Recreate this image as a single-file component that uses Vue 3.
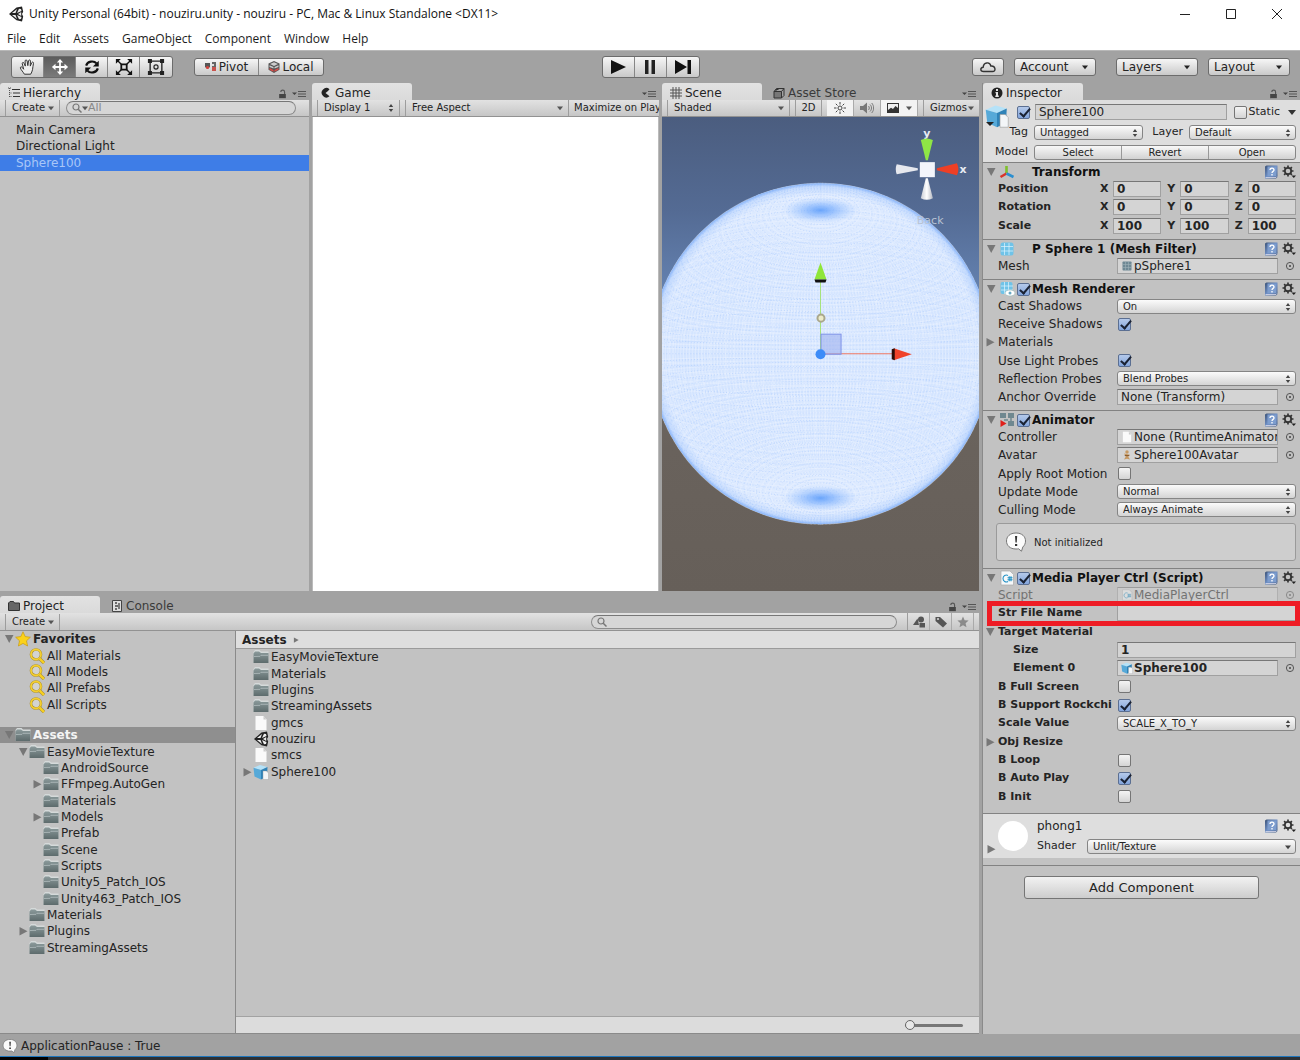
<script setup>
const menus = ['File', 'Edit', 'Assets', 'GameObject', 'Component', 'Window', 'Help']

const tools = [
  { id: 'hand', label: 'Hand' },
  { id: 'move', label: 'Move', active: true },
  { id: 'rotate', label: 'Rotate' },
  { id: 'scale', label: 'Scale' },
  { id: 'rect', label: 'Rect' },
]

const hierarchy = ['Main Camera', 'Directional Light', 'Sphere100']

const favorites = [
  { name: 'Favorites', icon: 'star', level: 0, fold: 'down', bold: true },
  { name: 'All Materials', icon: 'find', level: 1 },
  { name: 'All Models', icon: 'find', level: 1 },
  { name: 'All Prefabs', icon: 'find', level: 1 },
  { name: 'All Scripts', icon: 'find', level: 1 },
]

const folders = [
  { name: 'Assets', icon: 'folder', level: 0, fold: 'down', bold: true, selected: true },
  { name: 'EasyMovieTexture', icon: 'folder', level: 1, fold: 'down' },
  { name: 'AndroidSource', icon: 'folder', level: 2 },
  { name: 'FFmpeg.AutoGen', icon: 'folder', level: 2, fold: 'right' },
  { name: 'Materials', icon: 'folder', level: 2 },
  { name: 'Models', icon: 'folder', level: 2, fold: 'right' },
  { name: 'Prefab', icon: 'folder', level: 2 },
  { name: 'Scene', icon: 'folder', level: 2 },
  { name: 'Scripts', icon: 'folder', level: 2 },
  { name: 'Unity5_Patch_IOS', icon: 'folder', level: 2 },
  { name: 'Unity463_Patch_IOS', icon: 'folder', level: 2 },
  { name: 'Materials', icon: 'folder', level: 1 },
  { name: 'Plugins', icon: 'folder', level: 1, fold: 'right' },
  { name: 'StreamingAssets', icon: 'folder', level: 1 },
]

const files = [
  { name: 'EasyMovieTexture', icon: 'folder' },
  { name: 'Materials', icon: 'folder' },
  { name: 'Plugins', icon: 'folder' },
  { name: 'StreamingAssets', icon: 'folder' },
  { name: 'gmcs', icon: 'file' },
  { name: 'nouziru', icon: 'unity' },
  { name: 'smcs', icon: 'file' },
  { name: 'Sphere100', icon: 'cube', fold: 'right' },
]

const components = [
  {
    id: 'transform', title: 'Transform', icon: 'axes',
    rows: [
      { type: 'vector', label: 'Position', value: ['0', '0', '0'], bold: true },
      { type: 'vector', label: 'Rotation', value: ['0', '0', '0'], bold: true },
      { type: 'vector', label: 'Scale', value: ['100', '100', '100'], bold: true },
    ],
  },
  {
    id: 'filter', title: 'P Sphere 1 (Mesh Filter)', icon: 'mesh',
    rows: [{ type: 'object', label: 'Mesh', value: 'pSphere1', icon: 'meshsmall' }],
  },
  {
    id: 'renderer', title: 'Mesh Renderer', icon: 'renderer', toggle: true,
    rows: [
      { type: 'select', label: 'Cast Shadows', value: 'On' },
      { type: 'check', label: 'Receive Shadows', value: true },
      { type: 'fold', label: 'Materials', fold: 'right' },
      { type: 'check', label: 'Use Light Probes', value: true },
      { type: 'select', label: 'Reflection Probes', value: 'Blend Probes' },
      { type: 'object', label: 'Anchor Override', value: 'None (Transform)' },
    ],
  },
  {
    id: 'animator', title: 'Animator', icon: 'animator', toggle: true, help: 'Not initialized',
    rows: [
      { type: 'object', label: 'Controller', value: 'None (RuntimeAnimatorController)', icon: 'file' },
      { type: 'object', label: 'Avatar', value: 'Sphere100Avatar', icon: 'avatar' },
      { type: 'check', label: 'Apply Root Motion', value: false },
      { type: 'select', label: 'Update Mode', value: 'Normal' },
      { type: 'select', label: 'Culling Mode', value: 'Always Animate' },
    ],
  },
  {
    id: 'media', title: 'Media Player Ctrl (Script)', icon: 'script', toggle: true,
    rows: [
      { type: 'object', label: 'Script', value: 'MediaPlayerCtrl', icon: 'script', disabled: true },
      { type: 'text', label: 'Str File Name', value: '', bold: true, marked: true },
      { type: 'fold', label: 'Target Material', fold: 'down', bold: true },
      { type: 'text', label: 'Size', value: '1', bold: true, indent: true },
      { type: 'object', label: 'Element 0', value: 'Sphere100', icon: 'cube', bold: true, indent: true },
      { type: 'check', label: 'B Full Screen', value: false, bold: true },
      { type: 'check', label: 'B Support Rockchi', value: true, bold: true },
      { type: 'select', label: 'Scale Value', value: 'SCALE_X_TO_Y', bold: true },
      { type: 'fold', label: 'Obj Resize', fold: 'right', bold: true },
      { type: 'check', label: 'B Loop', value: false, bold: true },
      { type: 'check', label: 'B Auto Play', value: true, bold: true },
      { type: 'check', label: 'B Init', value: false, bold: true },
    ],
  },
]

// Unit sphere seen from a nearby camera, projected to scene coordinates.
const CX = 158
const CY = 236
const DISTANCE = 1.866
const FOCAL = 267.8

function project(lat, lon) {
  const x = Math.cos(lat) * Math.sin(lon)
  const y = Math.sin(lat)
  const z = Math.cos(lat) * Math.cos(lon)
  const k = FOCAL / (DISTANCE - z)
  return (CX + x * k).toFixed(1) + ' ' + (CY - y * k).toFixed(1)
}

function meridians(count) {
  let d = ''
  for (let i = 0; i < count; i++) {
    const lon = ((i + 0.5) / count) * Math.PI * 2
    for (let j = 0; j <= 40; j++) d += (j ? 'L' : 'M') + project(-Math.PI / 2 + (j / 40) * Math.PI, lon)
  }
  return d
}

function parallels(count) {
  let d = ''
  for (let i = 1; i < count; i++) {
    const lat = -Math.PI / 2 + (i / count) * Math.PI
    for (let j = 0; j <= 72; j++) d += (j ? 'L' : 'M') + project(lat, (j / 72) * Math.PI * 2)
  }
  return d
}

const meridianPath = meridians(180)
const parallelPath = parallels(90)
const dotPath = parallels(70)
</script>

<template>
  <div class="editor">
    <svg class="symbols" aria-hidden="true">
      <defs>
        <linearGradient id="gFolder" x1="0" y1="0" x2="0" y2="1"><stop offset="0" stop-color="#8b9a9b" /><stop offset="1" stop-color="#5d6b6c" /></linearGradient>
        <linearGradient id="gCone" x1="0" y1="0" x2="1" y2="0"><stop offset="0" stop-color="#c9ccd4" /><stop offset=".5" stop-color="#fff" /><stop offset="1" stop-color="#b4b8c2" /></linearGradient>
        <linearGradient id="gBook" x1="0" y1="0" x2="1" y2="1"><stop offset="0" stop-color="#3d5478" /><stop offset=".5" stop-color="#6f8fc4" /><stop offset="1" stop-color="#40577c" /></linearGradient>
      </defs>
      <symbol id="unity" viewBox="0 0 16 16">
        <path d="M8.5 1.5 14 .5l1.2 5.2L14 8l1.2 2.5L14 15.500l-5.500-1.200L1 8z" fill="#222" />
        <path d="M4 7l5-4-1.500 4zM4 9l5 4-1.500-4zM9 7l2-4.200 2 .2.500 2zM9 9l2 4.200 2-.2.500-2zM10 8l3.200-2v4z" fill="#eee" />
      </symbol>
      <symbol id="hand" viewBox="0 0 20 20">
        <path d="M6 18c-1-2-4-5-4.500-7 0-1.400 1.500-1.400 2.200-.4L5.200 12.500 3.600 6.200c-.2-1.500 1.600-1.700 2-.4L7 9 6.800 3.300c0-1.500 2-1.500 2.200 0L9.800 8.500l.8-5.400c.3-1.400 2.200-1.200 2.100.3L12.500 9l1.700-3.800c.6-1.200 2.200-.6 1.900.7-.6 2.600-.6 4.600-1.100 7.100-.4 2-1 3-2 5z" fill="#eee" stroke="#333" stroke-width="1.100" stroke-linejoin="round" />
      </symbol>
      <symbol id="move" viewBox="0 0 20 20">
        <path d="M10 1l3.500 4H11v4h4V6.500l4 3.500-4 3.500V11h-4v4h2.500L10 19l-3.500-4H9v-4H5v2.500L1 10l4-3.500V9h4V5H6.500z" fill="#fff" />
      </symbol>
      <symbol id="rotate" viewBox="0 0 20 20">
        <path d="M3.500 8.500C5 3.500 12 2.500 15 6M16.500 11.500C15 16.500 8 17.500 5 14" fill="none" stroke="#111" stroke-width="2.400" />
        <path d="M17.500 3v6.500H11zM2.500 17v-6.500H9z" fill="#111" />
      </symbol>
      <symbol id="scale" viewBox="0 0 20 20">
        <path d="M7 7h6v6H7z" fill="none" stroke="#111" stroke-width="2" />
        <path d="M3 3l4 4M17 3l-4 4M3 17l4-4M17 17l-4-4" stroke="#111" stroke-width="1.500" />
        <path d="M1 1h5.500L1 6.500zM19 1h-5.500L19 6.500zM1 19h5.500L1 13.500zM19 19h-5.500l5.500-5.500z" fill="#111" />
      </symbol>
      <symbol id="rect" viewBox="0 0 20 20">
        <path d="M3.500 3.500h13v13h-13z" fill="none" stroke="#222" stroke-width="1.500" />
        <path d="M1 1h4.500v4.500H1zM14.500 1H19v4.500h-4.500zM1 14.500h4.500V19H1zM14.500 14.500H19V19h-4.500z" fill="#222" />
        <circle cx="10" cy="10" r="2.300" fill="none" stroke="#222" stroke-width="1.300" />
      </symbol>
      <symbol id="pivot" viewBox="0 0 12 12">
        <path d="M0 2h5v4L2.500 8 0 6z" fill="#555" /><circle cx="2.500" cy="6.500" r="1.600" fill="#d8433c" />
        <path d="M7 1h4v9H7z" fill="#666" /><path d="M7 6h4v4H7z" fill="#c9524c" /><path d="M7 3h2v2H7z" fill="#ddd" />
      </symbol>
      <symbol id="local" viewBox="0 0 12 12">
        <path d="M6 0l5.500 2.500v6.300L6 12 .5 8.800V2.500z" fill="#555" /><path d="M6 1.300l4 1.700-4 1.900L2 3zM1.500 4.200L5.500 6v1.600L1.500 6zM6.500 6l4-1.800V6l-4 1.600z" fill="#ccc" />
        <path d="M1.500 7l4 2v1.800l-4-2zM10.500 7l-4 2v1.800l4-2z" fill="#dc4a45" />
      </symbol>
      <symbol id="list" viewBox="0 0 12 12"><path d="M4 2.500h8M5 6h7M5 9.500h7" stroke="#333" stroke-width="1.200" /><path d="M0 1h3M1.500 1v9M1.500 6H4M1.500 9.500H4" stroke="#555" stroke-width="1" fill="none" stroke-dasharray="1 1" /></symbol>
      <symbol id="pac" viewBox="0 0 12 12"><path d="M9.500 2.200A4.700 4.700 0 1 0 9.500 9.300L8 8 5.500 6 8 4z" fill="#222" /></symbol>
      <symbol id="hash" viewBox="0 0 12 12"><path d="M3 0v12M6 0v12M9 0v12M0 3h12M0 6h12M0 9h12" stroke="#555" stroke-width="1" /></symbol>
      <symbol id="store" viewBox="0 0 12 12"><path d="M1 4.500h7.500V11H1z" fill="#777" stroke="#333" /><path d="M1 4.500L3.500 1.500H11L8.500 4.500M11 1.500V8.500L8.500 11M3 4.500V2.500h2.500" fill="none" stroke="#333" /></symbol>
      <symbol id="info" viewBox="0 0 12 12"><circle cx="6" cy="6" r="5.500" fill="#222" /><path d="M5 2h2v2H5zM4.500 5H7v3.500h.800V10H4.300V8.500H5V6.200h-.500z" fill="#e4e4e4" /></symbol>
      <symbol id="projtab" viewBox="0 0 12 12"><path d="M.5 10.500V3L2 1.500h3.500L6.500 3h5v7.500z" fill="#666" stroke="#333" /></symbol>
      <symbol id="console" viewBox="0 0 12 12"><path d="M1.500.5h9v11h-9z" fill="#ddd" stroke="#444" /><path d="M4 3h2M4 6h3M4 9h2M8 3v6" stroke="#444" stroke-width="1.300" /></symbol>
      <symbol id="lock" viewBox="0 0 10 12"><path d="M1 6h8v5H1z" fill="#444" /><path d="M3 3.500C3 .500 7.500.500 7.500 3.500V6" fill="none" stroke="#555" stroke-width="1.400" /></symbol>
      <symbol id="panemenu" viewBox="0 0 14 8"><path d="M0 2.500h5L2.500 5z" fill="#444" /><path d="M6 1.500h8M6 4h8M6 6.500h8" stroke="#555" stroke-width="1" /></symbol>
      <symbol id="lens" viewBox="0 0 10 10"><circle cx="4" cy="4" r="3" fill="none" stroke="#777" stroke-width="1.200" /><path d="M6.200 6.200L9.500 9.500" stroke="#777" stroke-width="1.500" /></symbol>
      <symbol id="down" viewBox="0 0 8 8"><path d="M0 2h8L4 7z" fill="currentColor" /></symbol>
      <symbol id="updown" viewBox="0 0 6 8"><path d="M3 0l2.200 3H.8zM3 8l2.200-3H.8z" fill="currentColor" /></symbol>
      <symbol id="fold-down" viewBox="0 0 10 10"><path d="M1 1h8.500L5.200 9z" fill="#777" /></symbol>
      <symbol id="fold-right" viewBox="0 0 10 10"><path d="M1.500 1v8.500L9.500 5.200z" fill="#777" /></symbol>
      <symbol id="folder" viewBox="0 0 16 16"><path d="M.5 14V3l1.500-2h4.500L8 2.500h7.500V14z" fill="#d5dada" /><path d="M.5 14V4.500L2 2.500h4L8 4h7.500v10z" fill="url(#gFolder)" /><path d="M1 7.500l6-.2 1-1h7" fill="none" stroke="#b3bebf" stroke-width=".8" /></symbol>
      <symbol id="file" viewBox="0 0 16 16"><path d="M2.500 1h8l3 3.500V15h-11z" fill="#fafafa" /><path d="M10.500 1v3.500h3" fill="#ccc" /></symbol>
      <symbol id="star" viewBox="0 0 16 16"><path d="M8 .8l2.200 4.800 5.200.6-3.900 3.600 1.100 5.200L8 12.400 3.400 15l1.100-5.200L.6 6.200l5.200-.6z" fill="#fbd21b" stroke="#c89b12" stroke-width=".7" /></symbol>
      <symbol id="find" viewBox="0 0 16 16"><circle cx="7" cy="6.500" r="5" fill="#d3d3d0" stroke="#a48a35" stroke-width="2.600" /><circle cx="7" cy="6.500" r="5" fill="none" stroke="#f4cf2f" stroke-width="1.800" /><path d="M10.500 10.500l4.500 4.500" stroke="#a48a35" stroke-width="3.200" /><path d="M10.500 10.500l4.500 4.500" stroke="#f8d020" stroke-width="2.400" /></symbol>
      <symbol id="cube" viewBox="0 0 16 16"><path d="M.5 3.800L7 1l7.500 2-6.500 3z" fill="#b5e2f8" /><path d="M.5 3.800L8 6v9.500l-6.500-3z" fill="#56a9d8" /><path d="M8 6l6.500-3-.5 9.500-6 3z" fill="#2f83b8" /><path d="M10 7h3.500L15.500 9v6.500H10z" fill="#f3f6f8" stroke="#999" stroke-width=".4" /></symbol>
      <symbol id="axes" viewBox="0 0 16 16"><path d="M7.500 9V2" stroke="#7fc02c" stroke-width="2.600" /><path d="M7.500 9.500L1.500 13" stroke="#d8352b" stroke-width="2.600" /><path d="M7.500 9.500L14.500 13" stroke="#2b8fd0" stroke-width="2.600" /></symbol>
      <symbol id="mesh" viewBox="0 0 16 16"><rect x="1.500" y="1.500" width="13" height="13" rx="2.500" fill="#6fc3e8" /><path d="M5.500 2v12M10 2v12M2 5.500h12M2 10h12" stroke="#dff4fd" stroke-width=".7" /></symbol>
      <symbol id="renderer" viewBox="0 0 16 16"><rect x="1.500" y="1" width="12" height="12" rx="2" fill="#6fc3e8" /><path d="M5.500 1v12M9.500 1v12M2 5h12M2 9h12" stroke="#dff4fd" stroke-width=".7" /><ellipse cx="11" cy="12" rx="5" ry="3" fill="#fff" stroke="#9bb" stroke-width=".6" /><circle cx="11" cy="12" r="1.500" fill="#68a8c4" /></symbol>
      <symbol id="meshsmall" viewBox="0 0 16 16"><rect x="2" y="2" width="12" height="12" rx="1" fill="#6e8894" /><path d="M6 2v12M10 2v12M2 6h12M2 10h12" stroke="#9fb1b9" stroke-width=".8" /></symbol>
      <symbol id="animator" viewBox="0 0 16 16"><path d="M1 1h6v5H1zM9 1h6v5H9zM9 9h6v5H9z" fill="#6f8890" /><path d="M5 8h4M12 6v3" stroke="#6f8890" stroke-width="1.500" /><path d="M1.500 8l6 3.500-6 3.500z" fill="#e0201b" /></symbol>
      <symbol id="script" viewBox="0 0 16 16"><path d="M2 1h9l3.500 3.500V15H2z" fill="#f6f8f9" stroke="#aaa" stroke-width=".7" /><path d="M9 5.500A3.400 3.400 0 1 0 9 11.500M8.500 7.800h5M8.500 9.800h5M10.200 6.300v5M12 6.300v5" fill="none" stroke="#2492c6" stroke-width="1.100" /></symbol>
      <symbol id="avatar" viewBox="0 0 16 16"><circle cx="8" cy="4" r="2.300" fill="#c79a63" /><path d="M4 6l8 1.500L9.500 10 12 14l-4-1-4 1 2.500-4z" fill="#c79a63" /><path d="M5 8h6v1.500H5z" fill="#8a5d31" /></symbol>
      <symbol id="book" viewBox="0 0 14 14"><path d="M1 1.500L2.500.500H13.500V12L12 13.500H1z" fill="url(#gBook)" /><path d="M3.500 1.500h9v10h-9z" fill="#7d9dce" /><path d="M6 5c0-2.500 4-2.300 4 0 0 1.500-2 1.300-2 3M8 9v1.500" fill="none" stroke="#fff" stroke-width="1.300" /><path d="M1.500 12.500h10.500l1-1" fill="none" stroke="#dde" stroke-width=".8" /></symbol>
      <symbol id="gear" viewBox="0 0 14 14"><circle cx="6" cy="6" r="3.200" fill="none" stroke="#333" stroke-width="1.800" /><path d="M6 .5v2M6 9.500v2M.5 6h2M9.500 6h2M2.100 2.100l1.400 1.400M8.500 8.500l1.400 1.400M9.900 2.100L8.500 3.500M3.500 8.500L2.100 9.900" stroke="#333" stroke-width="1.700" /><path d="M9.500 10.500H14L11.800 13z" fill="#222" /></symbol>
      <symbol id="target" viewBox="0 0 10 10"><circle cx="5" cy="5" r="3.600" fill="none" stroke="#555" stroke-width="1" /><circle cx="5" cy="5" r="1" fill="#444" /></symbol>
      <symbol id="bubble" viewBox="0 0 22 22"><path d="M11 2c6 0 9.500 3.500 9.500 8 0 2.500-1 4.500-2.700 6l-1.300 4.200-3-2.400c-.8.200-1.600.2-2.500.2-6 0-9.500-3.500-9.500-8S5 2 11 2z" fill="#fbfbfb" stroke="#777" stroke-width="1" /><path d="M10 5h2.200l-.5 6.500h-1.200zM10 13h2.200v2H10z" fill="#333" /></symbol>
      <symbol id="cloud" viewBox="0 0 16 12"><path d="M3.500 10.500C0 10.500 0 6.500 3.200 6.200 3.500 1 10 .5 10.800 5 15.500 4.500 16.500 10.500 12.500 10.500z" fill="none" stroke="#333" stroke-width="1.400" /></symbol>
      <symbol id="sun" viewBox="0 0 12 12"><circle cx="6" cy="6" r="2" fill="none" stroke="#444" /><path d="M6 0v2.500M6 9.500V12M0 6h2.500M9.500 6H12M1.800 1.800l1.700 1.700M8.500 8.500l1.700 1.700M10.200 1.800L8.500 3.500M3.500 8.500l-1.700 1.700" stroke="#444" /></symbol>
      <symbol id="sound" viewBox="0 0 14 12"><path d="M0 4h3l4-3.500v11L3 8H0z" fill="#777" /><path d="M8.500 4c1 1 1 3 0 4M10 2.500c2 2 2 5 0 7M11.700 1c2.600 3 2.600 7 0 10" fill="none" stroke="#777" /></symbol>
      <symbol id="picture" viewBox="0 0 12 10"><path d="M0 0h12v10H0z" fill="#333" /><path d="M1 1h10v4L8.500 3 6 6 4 4.800 1 7z" fill="#eee" /></symbol>
      <symbol id="shapes" viewBox="0 0 12 12"><path d="M4.500 2.500L0 9h6z" fill="#555" /><circle cx="8" cy="3.500" r="3" fill="#555" /><path d="M6.500 7H12v4.500H6.500z" fill="#555" /></symbol>
      <symbol id="tag" viewBox="0 0 12 12"><path d="M.5 1h4.500L12 7.500 8 11.500.5 5z" fill="#555" /><circle cx="3" cy="3" r="1" fill="#ddd" /></symbol>
      <symbol id="graystar" viewBox="0 0 12 12"><path d="M6 .5l1.600 3.800 4 .3-3 2.700.9 4L6 9.200l-3.500 2.100.9-4-3-2.700 4-.3z" fill="#8b8b8b" /></symbol>
      <symbol id="play" viewBox="0 0 16 14"><path d="M1 0l15 7-15 7z" fill="#111" /></symbol>
      <symbol id="pause" viewBox="0 0 16 14"><path d="M3 0h3.500v14H3zM9.500 0H13v14H9.500z" fill="#222" /></symbol>
      <symbol id="step" viewBox="0 0 16 14"><path d="M0 0l12 7-12 7zM12.500 0H16v14h-3.500z" fill="#111" /></symbol>
    </svg>

    <header class="titlebar">
      <svg class="i16"><use href="#unity" /></svg>
      <h1>Unity Personal (64bit) - nouziru.unity - nouziru - PC, Mac &amp; Linux Standalone &lt;DX11&gt;</h1>
      <div class="winctl">
        <button aria-label="Minimize"><svg viewBox="0 0 12 12"><path d="M1 6.500h10" /></svg></button>
        <button aria-label="Maximize"><svg viewBox="0 0 12 12"><path d="M1.500 1.500h9v9h-9z" /></svg></button>
        <button aria-label="Close"><svg viewBox="0 0 12 12"><path d="M1 1l10 10M11 1L1 11" /></svg></button>
      </div>
    </header>

    <nav class="menubar">
      <a v-for="m in menus" :key="m" href="#">{{ m }}</a>
    </nav>

    <div class="toolbar">
      <div class="tb-left">
        <div class="group big">
          <button v-for="t in tools" :key="t.id" :class="{ active: t.active }" :aria-label="t.label"><svg class="i18"><use :href="'#' + t.id" /></svg></button>
        </div>
        <div class="group small">
          <button><svg class="i12"><use href="#pivot" /></svg>Pivot</button>
          <button><svg class="i12"><use href="#local" /></svg>Local</button>
        </div>
      </div>
      <div class="group big">
        <button v-for="p in ['play', 'pause', 'step']" :key="p" :aria-label="p"><svg class="i16"><use :href="'#' + p" /></svg></button>
      </div>
      <div class="tb-right">
        <button class="cloud" aria-label="Cloud"><svg class="i16"><use href="#cloud" /></svg></button>
        <span v-for="d in ['Account', 'Layers', 'Layout']" :key="d" class="drop" :class="d.toLowerCase()">
          <select :aria-label="d"><option>{{ d }}</option></select>
          <svg class="i6"><use href="#down" /></svg>
        </span>
      </div>
    </div>

    <main class="work">
      <div class="left">
        <div class="upper">
          <section class="pane hierarchy">
            <div class="tabs">
              <button class="tab on"><svg class="i12"><use href="#list" /></svg>Hierarchy</button>
              <span class="tabctl"><svg class="lock"><use href="#lock" /></svg><svg class="pm"><use href="#panemenu" /></svg></span>
            </div>
            <div class="strip">
              <button class="cell create">Create <svg class="i6"><use href="#down" /></svg></button>
              <label class="search"><svg class="i10"><use href="#lens" /></svg><svg class="i6"><use href="#down" /></svg><input type="text" placeholder="All" aria-label="Search hierarchy" /></label>
            </div>
            <ul class="objects">
              <li v-for="(o, i) in hierarchy" :key="o" :class="{ picked: i === 2 }">{{ o }}</li>
            </ul>
          </section>

          <section class="pane game">
            <div class="tabs">
              <button class="tab on"><svg class="i12"><use href="#pac" /></svg>Game</button>
              <span class="tabctl"><svg class="pm"><use href="#panemenu" /></svg></span>
            </div>
            <div class="strip">
              <button class="cell display">Display 1 <svg class="ud"><use href="#updown" /></svg></button>
              <button class="cell aspect">Free Aspect <svg class="i6"><use href="#down" /></svg></button>
              <button class="cell maximize">Maximize on Play</button>
            </div>
            <div class="gameview"></div>
          </section>

          <section class="pane scene">
            <div class="tabs">
              <button class="tab on"><svg class="i12"><use href="#hash" /></svg>Scene</button>
              <button class="tab"><svg class="i12"><use href="#store" /></svg>Asset Store</button>
              <span class="tabctl"><svg class="pm"><use href="#panemenu" /></svg></span>
            </div>
            <div class="strip">
              <button class="cell shaded">Shaded <svg class="i6"><use href="#down" /></svg></button>
              <button class="cell twod">2D</button>
              <span class="toggles">
                <button class="lit" aria-label="Lighting"><svg class="i12"><use href="#sun" /></svg></button>
                <button aria-label="Audio"><svg class="i14"><use href="#sound" /></svg></button>
                <button class="lit wide" aria-label="Effects"><svg class="i12"><use href="#picture" /></svg><svg class="i6"><use href="#down" /></svg></button>
              </span>
              <button class="cell gizmos">Gizmos <svg class="i6"><use href="#down" /></svg></button>
            </div>
            <svg class="sceneview" viewBox="0 0 316 473" preserveAspectRatio="xMidYMid slice">
              <defs>
                <linearGradient id="sky" x1="0" y1="0" x2="0" y2="1">
                  <stop offset="0" stop-color="#4b5d7f" /><stop offset=".2" stop-color="#546b94" /><stop offset=".38" stop-color="#6583b2" /><stop offset=".5" stop-color="#8ba5c8" /><stop offset=".54" stop-color="#6d6862" /><stop offset=".7" stop-color="#69625c" /><stop offset="1" stop-color="#665f59" />
                </linearGradient>
                <radialGradient id="rim"><stop offset="0" stop-color="#8bb7fb" stop-opacity="0" /><stop offset=".93" stop-color="#8bb7fb" stop-opacity=".04" /><stop offset=".98" stop-color="#8bb7fb" stop-opacity=".35" /><stop offset="1" stop-color="#7dadf8" stop-opacity=".9" /></radialGradient>
                <radialGradient id="pole"><stop offset="0" stop-color="#5d9dfa" stop-opacity=".9" /><stop offset=".4" stop-color="#76acfd" stop-opacity=".6" /><stop offset="1" stop-color="#9cc4ff" stop-opacity="0" /></radialGradient>
              </defs>
              <rect width="316" height="473" fill="url(#sky)" />
              <circle cx="158" cy="236" r="170" fill="#d6e6ff" />
              <path class="wire" :d="meridianPath" />
              <path class="wire" :d="parallelPath" />
              <path class="dots" :d="dotPath" />
              <circle cx="158" cy="236" r="170" fill="url(#rim)" />
              <ellipse cx="158" cy="93" rx="38" ry="13" fill="url(#pole)" />
              <ellipse cx="158" cy="380" rx="38" ry="13" fill="url(#pole)" />
              <path d="M158 236V163" stroke="#a6e27c" stroke-width="1" />
              <path d="M158 236h72" stroke="#f07a63" stroke-width="1" />
              <rect x="158.500" y="216.500" width="20" height="20" fill="#9fb0ee" fill-opacity=".6" stroke="#7f93e8" />
              <path d="M152 162L158 145l6 17z" fill="#8fe63a" /><path d="M152 162h12l-1 3h-10z" fill="#111" />
              <path d="M231 230.500L249 236.500l-18 6z" fill="#f0432a" /><path d="M229 231.500l3-1v12l-3-1z" fill="#2a0d08" />
              <circle cx="158.500" cy="200.500" r="3.500" fill="#ecebc8" stroke="#a9a78c" stroke-width="2" />
              <circle cx="158" cy="236.500" r="5" fill="#3d8cf8" />
              <text x="254" y="107" class="back">Back</text>
              <text x="264" y="20" class="axis" text-anchor="middle">y</text>
              <text x="300" y="56" class="axis" text-anchor="middle">x</text>
              <path d="M258 23q6-3 12 0l-5 20h-2z" fill="#8fe645" />
              <path d="M258 81q6 3 12 0l-5-20h-2z" fill="url(#gCone)" />
              <path d="M234 47q-2 5 0 10l21-4v-2z" fill="#e6e8ee" />
              <path d="M294 46q3 6 0 12l-20-5v-2z" fill="#ee3f25" />
              <rect x="257" y="45" width="15" height="15" fill="#f3f5fb" />
            </svg>
          </section>
        </div>

        <section class="pane project">
          <div class="tabs">
            <button class="tab on"><svg class="i12"><use href="#projtab" /></svg>Project</button>
            <button class="tab"><svg class="i12"><use href="#console" /></svg>Console</button>
            <span class="tabctl"><svg class="lock"><use href="#lock" /></svg><svg class="pm"><use href="#panemenu" /></svg></span>
          </div>
          <div class="strip">
            <button class="cell create">Create <svg class="i6"><use href="#down" /></svg></button>
            <label class="search wide"><svg class="i10"><use href="#lens" /></svg><input type="text" aria-label="Search project" /></label>
            <span class="filters">
              <button v-for="f in ['shapes', 'tag', 'graystar']" :key="f" :aria-label="f"><svg class="i12"><use :href="'#' + f" /></svg></button>
            </span>
          </div>
          <div class="browser">
            <div class="tree">
              <ul class="favs">
                <li v-for="n in favorites" :key="n.name" :class="['level' + n.level, { bold: n.bold }]">
                  <svg class="arrow"><use v-if="n.fold" :href="'#fold-' + n.fold" /></svg>
                  <svg class="i16"><use :href="'#' + n.icon" /></svg>{{ n.name }}
                </li>
              </ul>
              <ul class="dirs">
                <li v-for="(n, i) in folders" :key="i" :class="['level' + n.level, { bold: n.bold, selected: n.selected }]">
                  <svg class="arrow"><use v-if="n.fold" :href="'#fold-' + n.fold" /></svg>
                  <svg class="i16"><use :href="'#' + n.icon" /></svg>{{ n.name }}
                </li>
              </ul>
            </div>
            <div class="content">
              <div class="crumb">Assets <svg class="i6"><use href="#fold-right" /></svg></div>
              <ul class="files">
                <li v-for="f in files" :key="f.name">
                  <svg class="arrow"><use v-if="f.fold" :href="'#fold-' + f.fold" /></svg>
                  <svg class="i16"><use :href="'#' + f.icon" /></svg>{{ f.name }}
                </li>
              </ul>
              <div class="zoombar"><input type="range" min="0" max="100" value="0" aria-label="Icon size" /></div>
            </div>
          </div>
        </section>
      </div>

      <aside class="pane inspector">
        <div class="tabs">
          <button class="tab on"><svg class="i12"><use href="#info" /></svg>Inspector</button>
          <span class="tabctl"><svg class="lock"><use href="#lock" /></svg><svg class="pm"><use href="#panemenu" /></svg></span>
        </div>

        <div class="head">
          <div class="hrow">
            <input type="checkbox" checked aria-label="Enabled" />
            <input class="field name" type="text" value="Sphere100" aria-label="Name" />
            <label class="static"><input type="checkbox" />Static</label>
            <svg class="i8"><use href="#down" /></svg>
          </div>
          <div class="hrow">
            <label class="lab" for="tag">Tag</label>
            <span class="popup tagsel"><select id="tag"><option>Untagged</option></select><svg class="ud"><use href="#updown" /></svg></span>
            <label class="lab layer" for="layer">Layer</label>
            <span class="popup grow"><select id="layer"><option>Default</option></select><svg class="ud"><use href="#updown" /></svg></span>
          </div>
          <div class="hrow">
            <span class="lab">Model</span>
            <div class="triple"><button>Select</button><button>Revert</button><button>Open</button></div>
          </div>
          <svg class="prefab" viewBox="0 0 24 24"><use href="#cube" width="24" height="24" /><path d="M1 18h8l-4 4z" fill="#222" /></svg>
        </div>

        <section v-for="c in components" :key="c.id" class="comp" :class="c.id">
          <h2>
            <svg class="arrow"><use href="#fold-down" /></svg>
            <svg class="i16"><use :href="'#' + c.icon" /></svg>
            <span class="slot"><input v-if="c.toggle" type="checkbox" checked :aria-label="c.title" /></span>
            <span class="ctitle">{{ c.title }}</span>
            <svg class="i14"><use href="#book" /></svg>
            <svg class="i14 gear"><use href="#gear" /></svg>
          </h2>
          <div class="rows">
            <div v-for="(r, i) in c.rows" :key="r.label" class="row" :class="{ bold: r.bold, indent: r.indent, disabled: r.disabled }">
              <svg v-if="r.fold" class="arrow rowarrow"><use :href="'#fold-' + r.fold" /></svg>
              <label :for="c.id + i">{{ r.label }}</label>
              <template v-if="r.type === 'vector'">
                <span class="vec">
                  <template v-for="(v, k) in r.value" :key="k">
                    <label :for="c.id + i + (k || '')">{{ 'XYZ'[k] }}</label>
                    <input :id="c.id + i + (k || '')" class="field" type="text" :value="v" />
                  </template>
                </span>
              </template>
              <span v-else-if="r.type === 'select'" class="popup grow"><select :id="c.id + i"><option>{{ r.value }}</option></select><svg class="ud"><use href="#updown" /></svg></span>
              <input v-else-if="r.type === 'check'" :id="c.id + i" type="checkbox" :checked="r.value" />
              <input v-else-if="r.type === 'text'" :id="c.id + i" class="field grow" type="text" :value="r.value" />
              <template v-else-if="r.type === 'object'">
                <span class="field object grow"><svg v-if="r.icon" class="i12"><use :href="'#' + r.icon" /></svg><input :id="c.id + i" type="text" readonly :value="r.value" /></span>
                <svg class="i10 target"><use href="#target" /></svg>
              </template>
              <span v-if="r.marked" class="mark"></span>
            </div>
          </div>
          <p v-if="c.help" class="help"><svg class="i22"><use href="#bubble" /></svg>{{ c.help }}</p>
        </section>

        <section class="material">
          <svg class="arrow"><use href="#fold-right" /></svg>
          <span class="preview"></span>
          <div class="mbody">
            <div class="mrow"><span class="mname">phong1</span><svg class="i14"><use href="#book" /></svg><svg class="i14 gear"><use href="#gear" /></svg></div>
            <div class="mrow"><label for="shader">Shader</label><span class="popup grow"><select id="shader"><option>Unlit/Texture</option></select><svg class="ud"><use href="#down" /></svg></span></div>
          </div>
        </section>
        <div class="addwrap"><button class="add">Add Component</button></div>
      </aside>
    </main>

    <footer class="status"><svg class="i16"><use href="#bubble" /></svg>ApplicationPause : True</footer>
    <div class="taskbar"></div>
  </div>
</template>

<style>
body { margin: 0; background: #a2a2a2; }
</style>

<style scoped>
.editor {
  display: flex;
  flex-direction: column;
  min-height: 100vh;
  background: #a2a2a2;
  color: #242424;
  font-family: "DejaVu Sans", Verdana, sans-serif;
  font-size: 12px;
  line-height: 16px;
}
.editor * { box-sizing: border-box; }
.symbols { position: absolute; width: 0; height: 0; }
svg { display: block; flex: none; }
button, input, select { font: inherit; color: inherit; margin: 0; padding: 0; border: 0; background: none; outline: 0; }
button { display: flex; align-items: center; justify-content: center; }
ul { list-style: none; margin: 0; padding: 0; }
.i6 { width: 6px; height: 6px; color: #555; }
.i8 { width: 8px; height: 8px; color: #333; }
.i10 { width: 10px; height: 10px; }
.i12 { width: 12px; height: 12px; }
.i14 { width: 14px; height: 14px; }
.i16 { width: 16px; height: 16px; }
.i18 { width: 18px; height: 18px; }
.i22 { width: 22px; height: 22px; }
.ud { width: 6px; height: 8px; color: #444; }
.arrow { width: 10px; height: 10px; }
.grow { flex: 1; min-width: 0; }
.bold { font-weight: bold; }

.titlebar { display: flex; align-items: center; height: 28px; padding-left: 8px; gap: 5px; background: #fff; }
.titlebar h1 { flex: 1; margin: 0; font: 12px/16px "Open Sans", "Noto Sans", sans-serif; color: #111; white-space: nowrap; }
.winctl { display: flex; }
.winctl button { width: 46px; height: 28px; }
.winctl svg { width: 12px; height: 12px; fill: none; stroke: #222; stroke-width: 1; }
.menubar { display: flex; align-items: center; gap: 13px; height: 22px; padding-left: 7px; background: #fff; font: 12px/16px "Open Sans", "Noto Sans", sans-serif; }
.menubar a { color: #1c1c1c; text-decoration: none; }

.toolbar { display: flex; align-items: center; height: 33px; padding: 0 10px 0 11px; border-top: 1px solid #b8b8b8; }
.tb-left, .tb-right { display: flex; align-items: center; flex: 1 1 0; }
.tb-left { gap: 21px; }
.tb-right { justify-content: flex-end; gap: 10px; }
.group { display: flex; border: 1px solid #6c6c6c; border-radius: 3px; background: linear-gradient(#f6f6f6, #c9c9c9); overflow: hidden; }
.group button { border-right: 1px solid #868686; }
.group button:last-child { border-right: 0; }
.group.big button { width: 32px; height: 20px; }
.group.small button { width: 64px; height: 16px; gap: 2px; }
.group .active { background: linear-gradient(#5c5c5c, #7a7a7a); }
.cloud { width: 32px; height: 18px; border: 1px solid #6c6c6c; border-radius: 3px; background: linear-gradient(#f6f6f6, #c9c9c9); }
.drop { position: relative; width: 82px; }
.drop select { appearance: none; width: 100%; height: 18px; padding-left: 5px; border: 1px solid #6c6c6c; border-radius: 3px; background: linear-gradient(#f6f6f6, #c9c9c9); }
.drop svg { position: absolute; right: 8px; top: 6px; color: #222; pointer-events: none; }
.drop.layers { margin-left: 10px; }

.work { display: flex; flex: 1; }
.left { display: flex; flex-direction: column; flex: 1; min-width: 0; gap: 5px; }
.upper { display: grid; grid-template-columns: 309fr 347fr 317fr; gap: 3px; flex: 508 1 0; min-height: 0; }
.project { flex: 438 1 0; }
.pane { display: flex; flex-direction: column; min-width: 0; }
.tabs { display: flex; height: 17px; }
.tab { justify-content: flex-start; gap: 3px; width: 100px; padding: 2px 0 0 8px; border-radius: 3px 3px 0 0; white-space: nowrap; color: #3a3a3a; }
.tab + .tab { padding-left: 11px; }
.tab.on { background: linear-gradient(#e2e2e2, #dadada); color: #242424; }
.tabctl { display: flex; align-items: center; gap: 5px; margin-left: auto; padding: 4px 3px 0 0; }
.lock { width: 9px; height: 10px; }
.pm { width: 14px; height: 8px; }
.strip { display: flex; align-items: center; height: 17px; padding-left: 5px; border-bottom: 1px solid #929292; background: linear-gradient(#e2e2e2, #c6c6c6); font-size: 10px; line-height: 14px; overflow: hidden; white-space: nowrap; }
.cell { height: 16px; padding: 0 5px 0 6px; border: 0 solid #9d9d9d; border-width: 0 1px; justify-content: space-between; flex: none; }
.create { width: 55px; }
.search { display: flex; align-items: center; flex: 1; height: 14px; margin: 0 13px 0 6px; padding-left: 5px; border: 1px solid #8d8d8d; border-top-color: #777; border-radius: 7px; background: #d6d6d6; }
.search input { flex: 1; min-width: 0; height: 12px; font-size: 11px; line-height: 12px; }
.search input::placeholder { color: #888; opacity: 1; }
.search.wide { margin: 0 10px 0 auto; flex: 0 1 306px; }

.hierarchy { background: linear-gradient(#a2a2a2 0 17px, #c2c2c2 17px); }
.objects { display: flex; flex-direction: column; height: 49px; margin-top: 5px; }
.objects li { flex: 1; padding-left: 16px; }
.picked { background: #3e7de7; color: #a9c7f7; }
.display { width: 83px; }
.aspect { width: 164px; margin-left: 5px; }
.maximize { border: 0; padding: 0 0 0 5px; }
.gameview { flex: 1; background: #fff; border: 1px solid #bbb; border-width: 0 1px; }
.shaded { width: 123px; }
.twod { width: 27px; margin-left: 5px; justify-content: center; padding: 0; }
.toggles { display: flex; margin-left: 5px; }
.toggles button { width: 27px; height: 16px; border-right: 1px solid #aaa; }
.toggles .lit { background: #f3f3f3; }
.toggles .wide { width: 37px; gap: 7px; }
.gizmos { flex: 1 0 auto; margin-left: 5px; border-right: 0; }
.sceneview { flex: 1; width: 100%; height: 0; min-height: 0; }
.wire { fill: none; stroke: #fff; stroke-width: 1; stroke-opacity: .25; }
.dots { fill: none; stroke: #6ea6fb; stroke-width: 1; stroke-opacity: .22; stroke-dasharray: 1 2; }
.axis { font: bold 11px "DejaVu Sans", sans-serif; fill: #e8ecf4; }
.back { font: 11px "DejaVu Sans", sans-serif; fill: #b9c3d3; }

.project .strip { height: 18px; }
.filters { display: flex; margin-right: 5px; border-left: 1px solid #9d9d9d; }
.filters button { width: 22px; height: 17px; border-right: 1px solid #aaa; }
.browser { display: flex; flex: 1; background: #c2c2c2; border-bottom: 1px solid #8a8a8a; }
.tree { width: 236px; border-right: 1px solid #8a8a8a; }
.favs, .dirs, .files { display: flex; flex-direction: column; }
.favs { height: 82px; }
.dirs { height: 229px; margin-top: 14px; }
.tree li, .files li { display: flex; align-items: center; flex: 1; gap: 2px; white-space: nowrap; }
.tree .arrow, .files .arrow { margin-right: -1px; }
.level0 { padding-left: 4px; }
.level1 { padding-left: 18px; }
.level2 { padding-left: 32px; }
.selected { background: #8f8f8f; color: #f4f4f4; }
.content { display: flex; flex-direction: column; flex: 1; min-width: 0; }
.crumb { display: flex; align-items: center; gap: 6px; height: 18px; padding-left: 6px; background: #dedede; border-bottom: 1px solid #9b9b9b; font-weight: bold; }
.files { height: 131px; padding-left: 6px; margin-bottom: auto; }
.zoombar { display: flex; align-items: center; justify-content: flex-end; height: 17px; padding-right: 16px; background: #dcdcdc; border-top: 1px solid #a2a2a2; }
.zoombar input { appearance: none; width: 58px; height: 3px; border-radius: 2px; background: #777; }
.zoombar input::-webkit-slider-thumb { appearance: none; width: 10px; height: 10px; border: 1px solid #666; border-radius: 5px; background: #e8e8e8; }

.inspector { flex: none; width: 318px; margin-left: 3px; background: linear-gradient(#a2a2a2 0 17px, #c2c2c2 17px); border-left: 1px solid #8a8a8a; }
.head { position: relative; display: flex; flex-direction: column; height: 62px; padding-top: 2px; background: #dedede; }
.hrow { display: flex; align-items: center; height: 20px; padding-right: 4px; font-size: 11px; }
.hrow:first-child { padding-left: 34px; gap: 5px; font-size: 12px; }
.hrow .name { flex: 1; min-width: 0; }
.static { display: flex; align-items: center; gap: 2px; padding: 0 3px 0 2px; font-size: 11px; }
.lab { width: 51px; padding-right: 6px; text-align: right; }
.layer { width: 46px; }
.tagsel { width: 109px; }
.prefab { position: absolute; left: 2px; top: 4px; width: 24px; height: 24px; }
.triple { display: flex; flex: 1; border: 1px solid #868686; border-radius: 3px; background: linear-gradient(#f8f8f8, #d2d2d2); font-size: 10px; line-height: 13px; }
.triple button { flex: 1; height: 13px; border-right: 1px solid #999; }
.triple button:last-child { border: 0; }

.field { height: 16px; padding: 0 3px; border: 1px solid #a0a0a0; border-top-color: #777; background: #d4d4d4; }
.popup { position: relative; display: flex; }
.popup select { appearance: none; width: 100%; height: 15px; padding: 0 16px 0 5px; border: 1px solid #858585; border-radius: 3px; background: linear-gradient(#fbfbfb, #d4d4d4); font-size: 10px; font-weight: normal; line-height: 13px; }
.popup .ud { position: absolute; right: 5px; top: 4px; pointer-events: none; }
input[type="checkbox"] { position: relative; appearance: none; flex: none; width: 13px; height: 13px; border: 1px solid #757575; border-radius: 2px; background: linear-gradient(#f4f4f4, #d4d4d4); }
input[type="checkbox"]:checked { border-color: #5b6f92; background: linear-gradient(#b4c9ea, #83a5dc); }
input[type="checkbox"]:checked::after { content: ""; position: absolute; left: 4px; top: -1px; width: 4px; height: 9px; border: solid #1a2233; border-width: 0 2px 2px 0; transform: rotate(40deg); }

.comp { border-top: 1px solid #828282; padding: 1px 0 4px; }
.comp h2 { display: flex; align-items: center; height: 16px; margin: 0; padding: 0 4px 0 3px; font-size: 12px; line-height: 16px; white-space: nowrap; color: #111; }
.comp h2 .arrow { margin-right: 3px; }
.slot { display: flex; width: 17px; padding-left: 2px; }
.ctitle { flex: 1; }
.gear { margin-left: 4px; }
.rows { display: flex; flex-direction: column; }
.transform .rows { height: 55px; }
.filter .rows { height: 18px; }
.renderer .rows { height: 109px; }
.animator .rows { height: 91px; }
.media .rows { height: 220px; }
.row { position: relative; display: flex; align-items: center; flex: 1; min-height: 0; padding: 0 4px 0 15px; }
.row > label { flex: none; width: 119px; white-space: nowrap; }
.row.bold > label { font-size: 11px; }
.indent > label { padding-left: 15px; }
.rowarrow { position: absolute; left: 2px; top: 4px; }
.row > input[type="checkbox"] { margin-left: 1px; }
.vec { display: flex; align-items: center; flex: 1; gap: 4px; margin-left: -17px; }
.vec label { width: 9px; font-size: 11px; }
.vec .field { flex: 1; width: 0; min-width: 0; margin-right: 2px; font-weight: bold; }
.vec .field:last-child { margin-right: 0; }
.object { display: flex; align-items: center; }
.object input { flex: 1; min-width: 0; height: 14px; margin-right: -3px; }
.object svg { margin-right: 1px; }
.target { margin: 0 1px 0 7px; }
.disabled { opacity: .5; }
.mark { position: absolute; left: 4px; right: 0; top: -3px; bottom: -3px; border: 5px solid #ee1c25; pointer-events: none; }
.help { display: flex; align-items: center; gap: 7px; height: 38px; margin: 4px 4px 3px 13px; padding-left: 8px; border: 1px solid #9a9a9a; border-radius: 3px; background: #cecece; font-size: 10px; line-height: 13px; }
.media { padding-bottom: 7px; }

.material { display: flex; height: 45px; padding-right: 4px; border-top: 1px solid #828282; background: #dedede; }
.material .arrow { align-self: flex-end; margin: 0 0 4px 3px; }
.preview { width: 30px; height: 30px; margin: 7px 9px 0 2px; border-radius: 15px; background: #fff; }
.mbody { flex: 1; padding-top: 2px; }
.mrow { display: flex; align-items: center; height: 20px; }
.mname { flex: 1; }
.mrow label { width: 50px; font-size: 11px; }
.addwrap { margin-top: 7px; padding: 10px 41px; border-top: 1px solid #828282; }
.add { width: 100%; height: 23px; border: 1px solid #757575; border-radius: 3px; background: linear-gradient(#f2f2f2, #cdcdcd); font-size: 13px; }

.status { display: flex; align-items: center; gap: 3px; height: 22px; padding: 2px 0 0 2px; }
.taskbar { height: 4px; border-top: 1px solid #1d76bd; background: linear-gradient(90deg, #000 48px, #2c3034 48px); }
</style>
